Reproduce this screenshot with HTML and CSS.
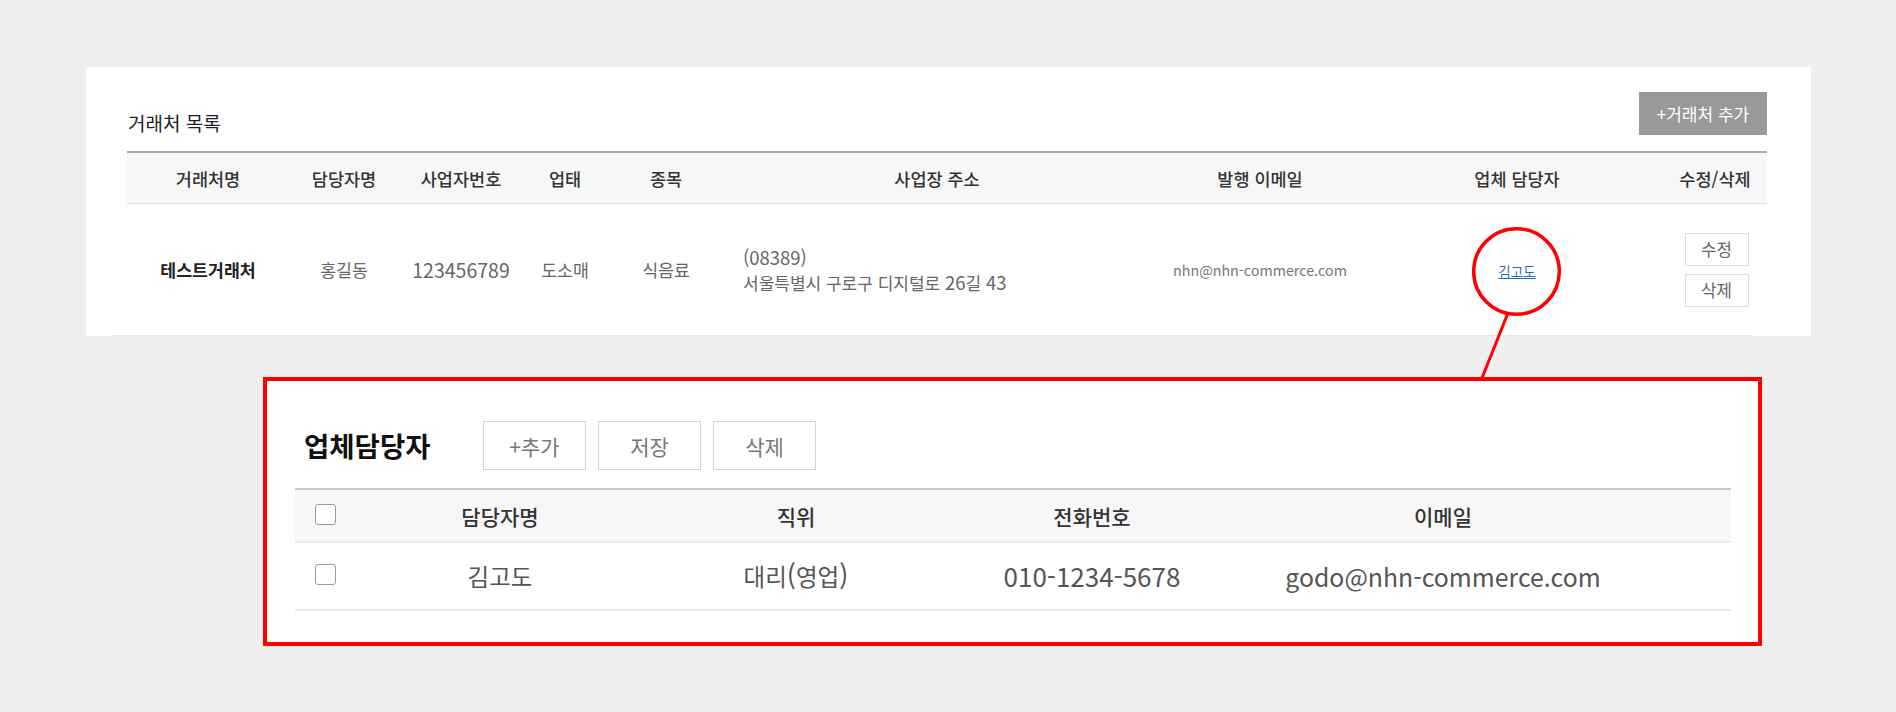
FILE: index.html
```html
<!DOCTYPE html>
<html lang="ko">
<head>
<meta charset="utf-8">
<title>거래처 목록</title>
<link rel="stylesheet" href="styles.css">
</head>
<body>
<div class="page">
  <section class="card">
    <div class="card-head">
      <h2 class="card-title">거래처 목록</h2>
      <button class="btn-add">+거래처 추가</button>
    </div>
    <div class="grid-main head">
      <div>거래처명</div>
      <div>담당자명</div>
      <div>사업자번호</div>
      <div>업태</div>
      <div>종목</div>
      <div>사업장 주소</div>
      <div>발행 이메일</div>
      <div>업체 담당자</div>
      <div>수정/삭제</div>
    </div>
    <div class="grid-main row">
      <div class="strong">테스트거래처</div>
      <div>홍길동</div>
      <div class="bizno">123456789</div>
      <div>도소매</div>
      <div>식음료</div>
      <div class="addr"><span class="dg">(08389)</span><br>서울특별시 구로구 디지털로 <span class="dg">26</span>길 <span class="dg">43</span></div>
      <div class="mail">nhn@nhn-commerce.com</div>
      <div><a class="link" href="#">김고도</a></div>
      <div class="actions">
        <button class="btn-sm">수정</button>
        <button class="btn-sm">삭제</button>
      </div>
    </div>
    <div class="row-line"></div>
  </section>

  <section class="popup">
    <div class="popup-head">
      <h3 class="popup-title">업체담당자</h3>
      <div class="popup-btns">
        <button class="btn-pop">+추가</button>
        <button class="btn-pop">저장</button>
        <button class="btn-pop">삭제</button>
      </div>
    </div>
    <div class="grid-pop phead">
      <div><span class="chk"></span></div>
      <div>담당자명</div>
      <div>직위</div>
      <div>전화번호</div>
      <div>이메일</div>
      <div></div>
    </div>
    <div class="grid-pop prow">
      <div><span class="chk"></span></div>
      <div>김고도</div>
      <div>대리<span class="paren">(</span>영업<span class="paren">)</span></div>
      <div class="phone">010-1234-5678</div>
      <div class="pmail">godo@nhn-commerce.com</div>
      <div></div>
    </div>
  </section>

  <svg class="callout" width="1896" height="712" viewBox="0 0 1896 712">
    <circle cx="1516.5" cy="271.5" r="42.8" fill="none" stroke="#ff0000" stroke-width="3.5"/>
    <line x1="1508" y1="313" x2="1482" y2="378" stroke="#ff0000" stroke-width="3"/>
  </svg>
</div>
</body>
</html>
```

FILE: styles.css
```css
* { box-sizing: border-box; }
html, body {
  margin: 0;
  padding: 0;
  background: #efefef;
  font-family: "Noto Sans CJK KR", "Noto Sans", sans-serif;
  color: #333;
}
.page {
  position: relative;
  width: 1896px;
  height: 712px;
  padding-top: 67px;
  overflow: hidden;
}
button { font-family: inherit; cursor: pointer; }

.card {
  margin-left: 86px;
  width: 1725px;
  background: #fff;
  padding: 25px 44px 0 41px;
}
.card-head {
  display: flex;
  justify-content: space-between;
  align-items: flex-end;
  height: 43px;
}
.card-title {
  margin: 0 0 -1px 1px;
  font-size: 19px;
  font-weight: 400;
  line-height: 27px;
  color: #222;
}
.btn-add {
  width: 128px;
  height: 43px;
  border: 0;
  background: #999;
  color: #fff;
  font-size: 17px;
  padding: 0;
}

.grid-main {
  display: grid;
  grid-template-columns: 162px 110px 124px 84px 118px 424px 222px 292px 104px;
  align-items: center;
  text-align: center;
}
.grid-main.head {
  margin-top: 16px;
  height: 53px;
  background: #f7f7f7;
  border-top: 2px solid #aaa;
  border-bottom: 1px solid #ddd;
  font-size: 17.5px;
  font-weight: 500;
  color: #333;
}
.grid-main.row {
  height: 131px;
  font-size: 17.3px;
  color: #666;
}
.grid-main.row .strong {
  color: #222;
  font-weight: 700;
}
.grid-main.row .bizno {
  font-size: 19.5px;
}
.grid-main.row .addr {
  text-align: left;
  padding-left: 18px;
  line-height: 25px;
  padding-bottom: 2px;
  margin-top: 2px;
  font-size: 17px;
}
.addr .dg {
  font-size: 18.5px;
}
.grid-main.row .mail {
  font-size: 14.3px;
  color: #777;
}
.link {
  font-size: 13.5px;
  color: #1f6fbf;
  text-decoration: underline;
}
.actions {
  display: flex;
  flex-direction: column;
  align-items: center;
  gap: 8px;
  padding-left: 3px;
}
.btn-sm {
  width: 64px;
  height: 33px;
  border: 1px solid #ddd;
  background: #fff;
  color: #666;
  font-size: 16.8px;
  padding: 0;
}
.row-line {
  height: 1px;
  background: #e6e6e6;
  margin-left: -15px;
  margin-right: 15px;
}

.popup {
  margin-top: 41px;
  margin-left: 263px;
  width: 1499px;
  border: 4px solid #ff0000;
  background: #fff;
  padding: 40px 27px 31px 28px;
}
.popup-head {
  display: flex;
  align-items: center;
  height: 49px;
}
.popup-title {
  margin: 0 0 0 9px;
  font-size: 27.5px;
  font-weight: 700;
  color: #111;
  width: 179px;
  line-height: 1;
}
.popup-btns {
  display: flex;
  gap: 12px;
}
.btn-pop {
  width: 103px;
  height: 49px;
  border: 1px solid #d3d3d3;
  background: #fff;
  color: #777;
  font-size: 21px;
  padding: 0;
}
.grid-pop {
  display: grid;
  grid-template-columns: 60px 290px 302px 290px 412px 82px;
  align-items: center;
  text-align: center;
}
.grid-pop.phead {
  margin-top: 18px;
  height: 55px;
  background: #f7f7f7;
  border-top: 2px solid #c8c8c8;
  border-bottom: 2px solid #ebebeb;
  font-size: 21px;
  font-weight: 500;
  color: #333;
}
.grid-pop.prow {
  height: 68px;
  border-bottom: 2px solid #ebebeb;
  font-size: 23.5px;
  color: #555;
}
.grid-pop.prow .paren {
  font-size: 27px;
  line-height: 1;
}
.grid-pop.prow .phone {
  font-size: 26px;
  line-height: 1;
}
.grid-pop.prow .pmail {
  font-size: 24.8px;
  line-height: 1;
}
.grid-pop .chk {
  display: block;
  width: 21px;
  height: 21px;
  margin-left: 20px;
  border: 1px solid #999;
  border-radius: 3px;
  background: #fff;
}
.grid-pop.phead .chk { margin-top: -2px; }
.grid-pop.prow .chk { margin-top: -3px; }

.callout {
  position: absolute;
  left: 0;
  top: 0;
  pointer-events: none;
}
```
